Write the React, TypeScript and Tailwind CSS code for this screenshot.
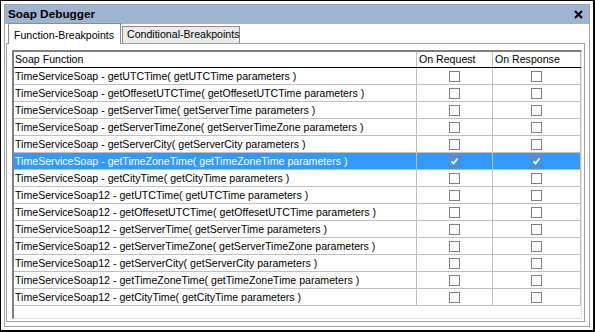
import React from 'react';

// soap functions listed in the debugger
const rows = [
  { name: 'TimeServiceSoap - getUTCTime( getUTCTime parameters )' },
  { name: 'TimeServiceSoap - getOffesetUTCTime( getOffesetUTCTime parameters )' },
  { name: 'TimeServiceSoap - getServerTime( getServerTime parameters )' },
  { name: 'TimeServiceSoap - getServerTimeZone( getServerTimeZone parameters )' },
  { name: 'TimeServiceSoap - getServerCity( getServerCity parameters )' },
  { name: 'TimeServiceSoap - getTimeZoneTime( getTimeZoneTime parameters )', selected: true },
  { name: 'TimeServiceSoap - getCityTime( getCityTime parameters )' },
  { name: 'TimeServiceSoap12 - getUTCTime( getUTCTime parameters )' },
  { name: 'TimeServiceSoap12 - getOffesetUTCTime( getOffesetUTCTime parameters )' },
  { name: 'TimeServiceSoap12 - getServerTime( getServerTime parameters )' },
  { name: 'TimeServiceSoap12 - getServerTimeZone( getServerTimeZone parameters )' },
  { name: 'TimeServiceSoap12 - getServerCity( getServerCity parameters )' },
  { name: 'TimeServiceSoap12 - getTimeZoneTime( getTimeZoneTime parameters )' },
  { name: 'TimeServiceSoap12 - getCityTime( getCityTime parameters )' },
];

function Check({ checked }: { checked?: boolean }) {
  return (
    <div className="w-[11px] h-[11px] border border-[#808080] flex items-center justify-center">
      {checked && (
        <svg width="9" height="9" viewBox="0 0 9 9">
          <path d="M1.5 4.5 L3.5 6.5 L7.5 1.5" stroke="#fff" strokeWidth="1.8" fill="none" />
        </svg>
      )}
    </div>
  );
}

export default function App() {
  return (
    <div
      className="w-[595px] h-[332px] bg-white border-l border-t border-r-2 border-b-2 border-black p-[3px] text-[10.6px] text-black"
      style={{ fontFamily: '"Liberation Sans", Arial, sans-serif' }}
    >
      <div className="h-full flex flex-col border border-[#a0a0a0]">
        {/* Title bar */}
        <div className="h-[19px] bg-[#9db5d2] flex items-center justify-between pl-[3px] pr-[6px]">
          <span className="text-[11.8px] font-bold leading-none">Soap Debugger</span>
          <svg width="9" height="9" viewBox="0 0 9 9">
            <path d="M1 1 L8 8 M8 1 L1 8" stroke="#000" strokeWidth="2" />
          </svg>
        </div>

        {/* Tabs */}
        <div className="h-[20px] flex items-end pl-[3px] -mb-px relative z-10 whitespace-nowrap">
          <div className="h-[21px] w-[113px] bg-white border-l border-t border-r border-[#898c95] flex items-start pl-[5px] pt-[4px]">
            Function-Breakpoints
          </div>
          <div className="h-[17px] w-[118px] ml-px mb-px bg-[#ebebeb] border border-b-0 border-[#898c95] flex items-center pl-[4px]">
            Conditional-Breakpoints
          </div>
        </div>

        {/* Tab page */}
        <div className="flex-1 ml-px mr-[4px] mb-[4px] border border-[#a0a0a0] bg-white pl-[5px] pr-[2px] pt-[6px] pb-[2px] flex">
          <div className="flex-1 flex flex-col border-l-2 border-t-2 border-[#808080] border-r border-b border-r-[#e3e3e3] border-b-[#e3e3e3]">
            {/* Header */}
            <div className="grid grid-cols-[403px_76px_88px] h-[16px] border-b border-black">
              <div className="border-r border-[#c0c0c0] pl-[1px] leading-[15px]">Soap Function</div>
              <div className="border-r border-[#c0c0c0] pl-[2px] leading-[15px]">On Request</div>
              <div className="border-r border-[#c0c0c0] pl-[2px] leading-[15px]">On Response</div>
            </div>
            {rows.map((row, idx) => (
              <div
                key={idx}
                className={
                  'grid grid-cols-[403px_76px_88px] h-[17px] border-b border-[#c0c0c0] ' +
                  (row.selected ? 'bg-[#3399ff] text-white' : '')
                }
              >
                <div className="border-r border-[#c0c0c0] pl-[1px] leading-[16px] whitespace-nowrap overflow-hidden">
                  {row.name}
                </div>
                <div className="border-r border-[#c0c0c0] flex items-center justify-center">
                  <Check checked={row.selected} />
                </div>
                <div className="border-r border-[#c0c0c0] flex items-center justify-center">
                  <Check checked={row.selected} />
                </div>
              </div>
            ))}
          </div>
        </div>
      </div>
    </div>
  );
}
